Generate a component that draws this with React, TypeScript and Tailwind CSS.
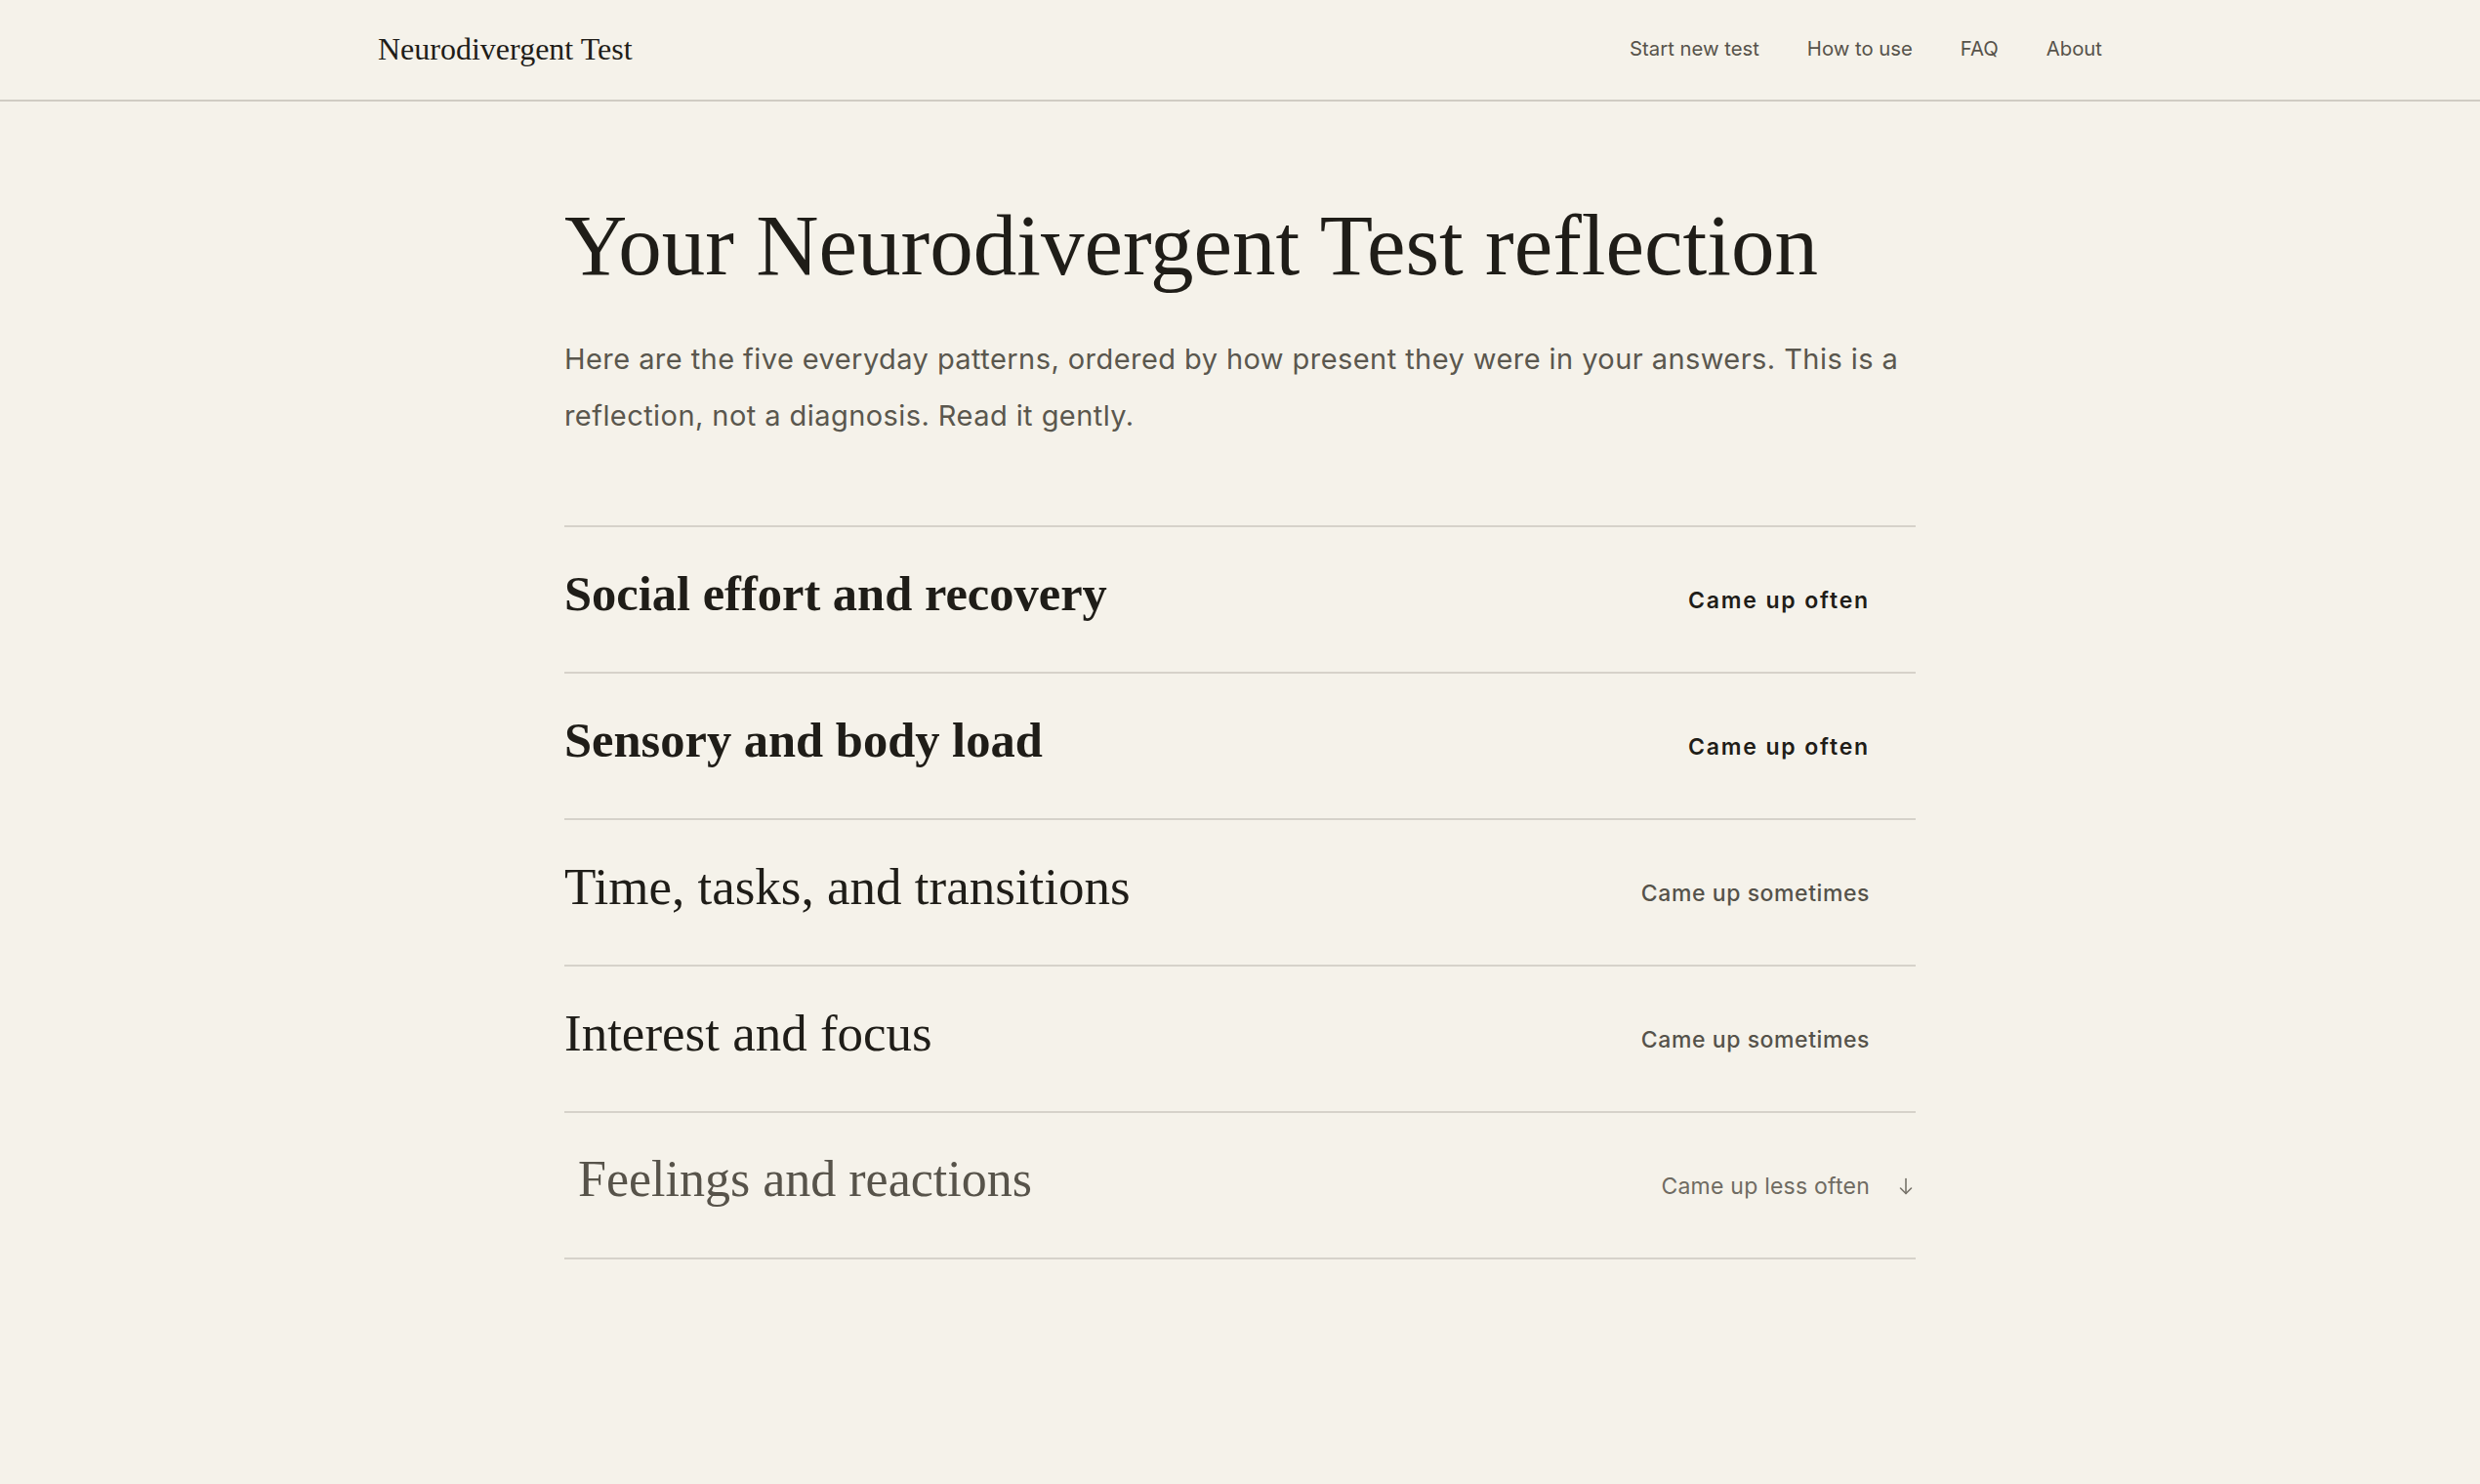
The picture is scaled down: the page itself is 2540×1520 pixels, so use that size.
import React from "react";

interface Pattern {
    title: string;
    label: string;
    level: "often" | "sometimes" | "less";
}

const patterns: Pattern[] = [
    { title: "Social effort and recovery", label: "Came up often", level: "often" },
    { title: "Sensory and body load", label: "Came up often", level: "often" },
    { title: "Time, tasks, and transitions", label: "Came up sometimes", level: "sometimes" },
    { title: "Interest and focus", label: "Came up sometimes", level: "sometimes" },
    { title: "Feelings and reactions", label: "Came up less often", level: "less" },
];

const serif = "font-['Liberation_Serif',serif]";
const sans = "font-['Inter',sans-serif]";

const PatternRow = ({ item }: { item: Pattern }) => {
    const titleClass =
        item.level === "often"
            ? "font-bold text-[50.5px] text-[#1f1d18]"
            : item.level === "sometimes"
            ? "font-normal text-[53px] text-[#1f1d18]"
            : "font-normal text-[52px] text-[#57534a] pl-[14px]";

    const labelClass =
        item.level === "often"
            ? "font-semibold tracking-[0.08em] text-[#1f1d18]"
            : item.level === "sometimes"
            ? "font-medium tracking-[0.025em] text-[#55524a]"
            : "font-normal tracking-[0.01em] text-[#6f6b62]";

    return (
        <div className="flex items-center justify-between h-[150px] border-t-2 border-[#d6d2ca]">
            <h2 className={`${serif} leading-[1.2] mb-[11px] ${titleClass}`}>{item.title}</h2>
            <div className="flex items-center mt-[2px]">
                <span className={`${sans} text-[23px] ${labelClass}`}>{item.label}</span>
                <span className="w-[20px] ml-[27px] flex justify-center">
                    {item.level === "less" && (
                        <svg width="16" height="18" viewBox="0 0 16 18" fill="none" stroke="#77736a" strokeWidth="1.6" strokeLinecap="round" strokeLinejoin="round">
                            <path d="M8 1.5v15" />
                            <path d="M2.5 11l5.5 5.5 5.5-5.5" />
                        </svg>
                    )}
                </span>
            </div>
        </div>
    );
};

const App = () => {
    return (
        <div className="min-h-screen bg-[#f5f2ea]">
            {/* Header */}
            <header className="border-b-2 border-[#d0ccc3]">
                <div className="max-w-[1766px] mx-auto h-[102px] flex items-center justify-between">
                    <span className={`${serif} text-[32px] text-[#1f1d18] mb-[2px]`}>Neurodivergent Test</span>
                    <nav className={`${sans} flex items-center gap-[49px] text-[20.3px] text-[#57534a] mb-[2px]`}>
                        <a href="#">Start new test</a>
                        <a href="#">How to use</a>
                        <a href="#">FAQ</a>
                        <a href="#">About</a>
                    </nav>
                </div>
            </header>

            {/* Results */}
            <main className="w-[1384px] mx-auto pt-[99px] pb-[200px]">
                <h1 className={`${serif} text-[89px] leading-[1.1] text-[#1f1d18]`}>
                    Your Neurodivergent Test reflection
                </h1>
                <p className={`${sans} mt-[38px] text-[29px] tracking-[0.015em] leading-[58px] text-[#5a574e]`}>
                    Here are the five everyday patterns, ordered by how present they were in your answers. This is a
                    reflection, not a diagnosis. Read it gently.
                </p>

                <div className="mt-[83px] border-b-2 border-[#d6d2ca]">
                    {patterns.map((p, i) => (
                        <PatternRow key={i} item={p} />
                    ))}
                </div>
            </main>
        </div>
    );
};

export default App;
